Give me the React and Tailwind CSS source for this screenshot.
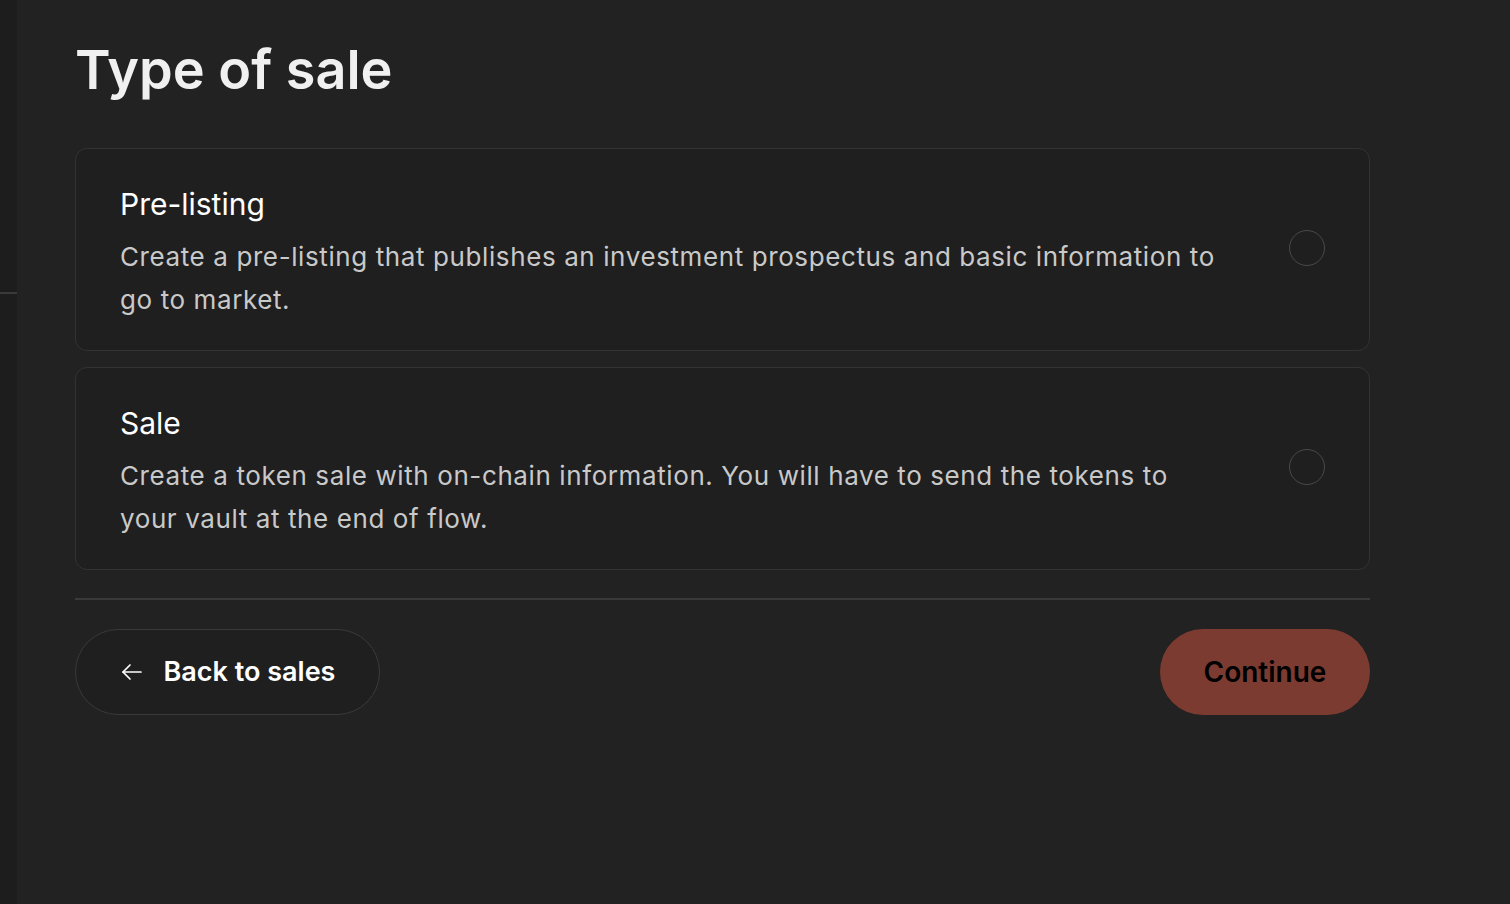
import React from "react";

const font = { fontFamily: "Inter, 'Noto Sans', sans-serif" };

function Option({ title, desc }) {
  return (
    <div className="flex items-center justify-between rounded-[12px] border border-[#333333] bg-[#1f1f1f] px-[44px] pt-[36px] pb-[29px]">
      <div className="w-[1104px]">
        <div className="text-[30px] leading-[38px] text-white">{title}</div>
        <div className="mt-[12px] text-[26px] leading-[43px] tracking-[0.6px] text-[#c9c9c9]">{desc}</div>
      </div>
      <div className="mb-[11px] h-[36px] w-[36px] shrink-0 rounded-full border border-[#4a4a4a]" />
    </div>
  );
}

export default function App() {
  return (
    <div className="flex h-[904px] w-full overflow-hidden bg-[#222222]" style={font}>
      <div className="w-[17px] shrink-0 bg-[#1d1d1d]">
        <div className="h-[294px] border-b-2 border-[#3a3a3a]" />
      </div>
      <div className="flex-1 pl-[58px] pt-[35px]">
        <div className="w-[1295px]">
          <h1 className="text-[54px] font-semibold leading-[70px] text-[#f0f0f0]">Type of sale</h1>
          <div className="mt-[43px] flex flex-col gap-[16px]">
            <Option
              title="Pre-listing"
              desc="Create a pre-listing that publishes an investment prospectus and basic information to go to market."
            />
            <Option
              title="Sale"
              desc="Create a token sale with on-chain information. You will have to send the tokens to your vault at the end of flow."
            />
          </div>
          <div className="mt-[28px] h-[2px] bg-[#3a3a3a]" />
          <div className="mt-[29px] flex items-center justify-between">
            <button className="flex h-[86px] w-[305px] items-center justify-center gap-[20px] rounded-full border border-[#3a3a3a] bg-[#1f1f1f] text-[27px] font-semibold text-white">
              <svg width="24" height="24" viewBox="0 0 24 24" fill="none" stroke="currentColor" strokeWidth="1.7" strokeLinecap="round" strokeLinejoin="round">
                <path d="M21 12H3" />
                <path d="M10 5l-7 7 7 7" />
              </svg>
              <span>Back to sales</span>
            </button>
            <button className="flex h-[86px] w-[210px] items-center justify-center rounded-full bg-[#7c3b31] text-[28px] font-semibold text-black">
              Continue
            </button>
          </div>
        </div>
      </div>
    </div>
  );
}
